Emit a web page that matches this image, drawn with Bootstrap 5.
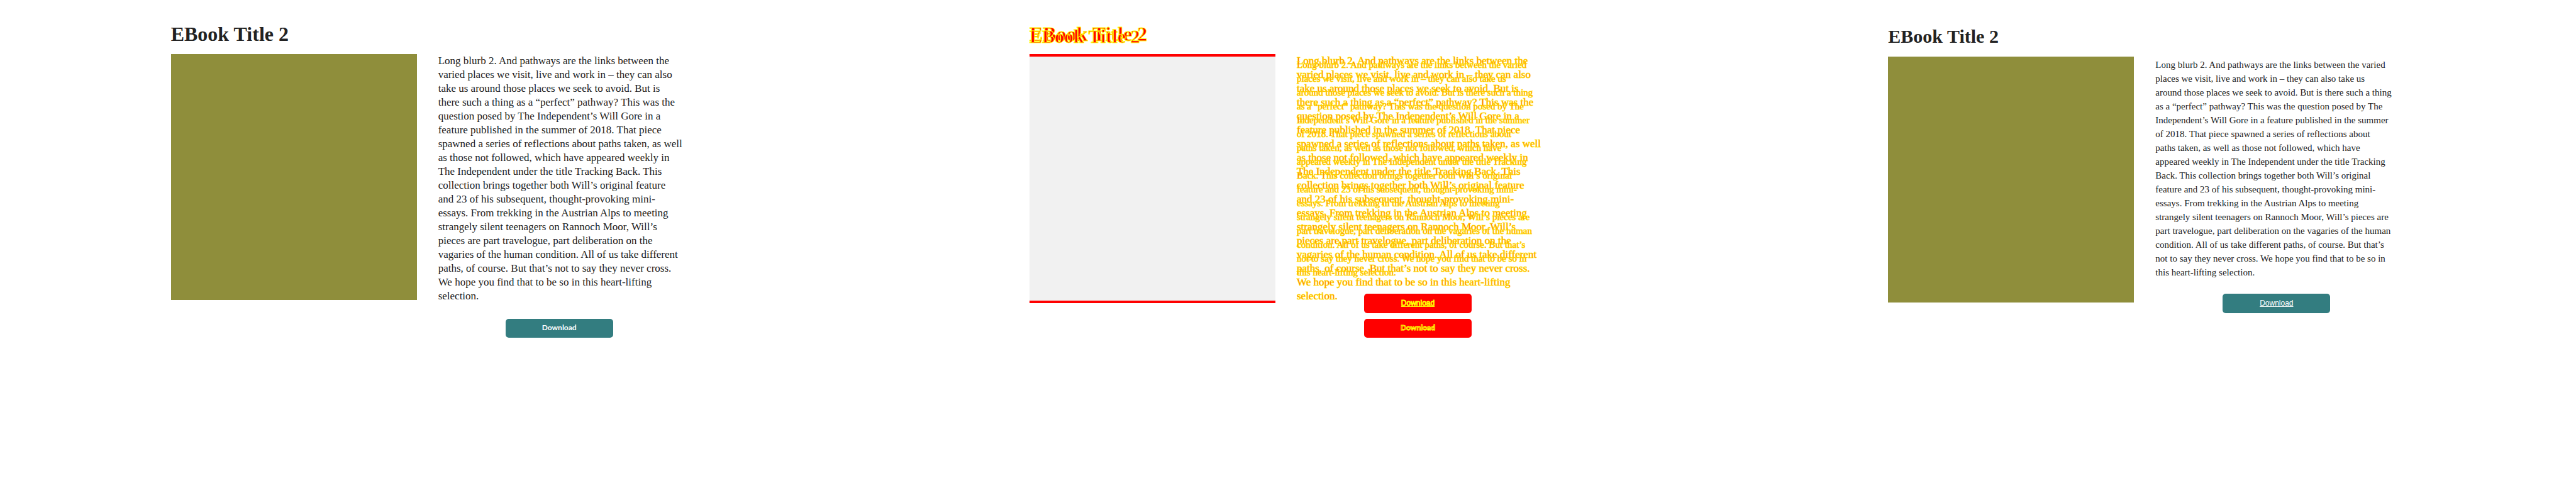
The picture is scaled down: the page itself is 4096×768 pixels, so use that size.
<!DOCTYPE html>
<html lang="en">
<head>
<meta charset="utf-8">
<meta name="viewport" content="width=device-width, initial-scale=1">
<title>EBook Title 2</title>
<link href="https://cdn.jsdelivr.net/npm/bootstrap@5.3.0/dist/css/bootstrap.min.css" rel="stylesheet">
<style>
  body { background: #fff; color: #222; font-family: "Liberation Serif", serif; }
  .ebook { max-width: 822px; padding-top: 34px; }
  .ebook-fallback { padding-top: 38px; }
  .ebook-title { font-size: 32px; line-height: 40px; font-weight: 700; margin-bottom: 12px; white-space: nowrap; }
  .ebook-fallback .ebook-title { font-size: 30px; }
  .ebook-body { gap: 34px; }
  .cover { flex: 0 0 391px; height: 391px; background: #8f8e3b; }
  .copy { flex: 0 1 385px; min-width: 0; }
  .blurb { font-size: 17px; line-height: 22px; margin-bottom: 25px; white-space: nowrap; }
  .ebook-fallback .blurb { font-size: 15px; padding-top: 2px; margin-bottom: 23px; }
  .download { width: 171px; height: 30px; border-radius: 5px; background: #337d80; color: #fff;
    font: 700 12px/28px Lato, sans-serif; text-align: center; text-decoration: none; }
  .ebook-fallback .download { height: 31px; font: 400 12px/31px "Liberation Sans", sans-serif; text-decoration: underline; }
  /* both versions share one grid cell in the comparison column */
  .layers { display: grid; }
  .layers > * { grid-area: 1 / 1; width: 100%; }
  .layers .ebook-title { color: #f00; -webkit-text-stroke: 1px #ff0; }
  .layers .blurb { color: #f00; -webkit-text-stroke: 1px rgba(255, 240, 0, .8); }
  .layers .cover { background: #f1f1f1; height: 396px; border: solid #f00; border-width: 4px 0; }
  .layers .ebook-fallback .cover { visibility: hidden; }
  .layers .download { background: #f00; color: #f00; -webkit-text-stroke: 1px #ff0; }
</style>
</head>
<body>
<main class="container-fluid p-0">
  <div class="row g-0">
    <section class="col-4">
      <article class="ebook mx-auto">
        <h2 class="ebook-title">EBook Title 2</h2>
        <div class="ebook-body d-flex align-items-start">
          <div class="cover"></div>
          <div class="copy">
            <p class="blurb">Long blurb 2. And pathways are the links between the<br>varied places we visit, live and work in – they can also<br>take us around those places we seek to avoid. But is<br>there such a thing as a “perfect” pathway? This was the<br>question posed by The Independent’s Will Gore in a<br>feature published in the summer of 2018. That piece<br>spawned a series of reflections about paths taken, as well<br>as those not followed, which have appeared weekly in<br>The Independent under the title Tracking Back. This<br>collection brings together both Will’s original feature<br>and 23 of his subsequent, thought-provoking mini-<br>essays. From trekking in the Austrian Alps to meeting<br>strangely silent teenagers on Rannoch Moor, Will’s<br>pieces are part travelogue, part deliberation on the<br>vagaries of the human condition. All of us take different<br>paths, of course. But that’s not to say they never cross.<br>We hope you find that to be so in this heart-lifting<br>selection.</p>
            <a class="download d-block mx-auto" href="#">Download</a>
          </div>
        </div>
      </article>
    </section>
    <section class="col-4 layers">
      <article class="ebook mx-auto">
        <h2 class="ebook-title">EBook Title 2</h2>
        <div class="ebook-body d-flex align-items-start">
          <div class="cover"></div>
          <div class="copy">
            <p class="blurb">Long blurb 2. And pathways are the links between the<br>varied places we visit, live and work in – they can also<br>take us around those places we seek to avoid. But is<br>there such a thing as a “perfect” pathway? This was the<br>question posed by The Independent’s Will Gore in a<br>feature published in the summer of 2018. That piece<br>spawned a series of reflections about paths taken, as well<br>as those not followed, which have appeared weekly in<br>The Independent under the title Tracking Back. This<br>collection brings together both Will’s original feature<br>and 23 of his subsequent, thought-provoking mini-<br>essays. From trekking in the Austrian Alps to meeting<br>strangely silent teenagers on Rannoch Moor, Will’s<br>pieces are part travelogue, part deliberation on the<br>vagaries of the human condition. All of us take different<br>paths, of course. But that’s not to say they never cross.<br>We hope you find that to be so in this heart-lifting<br>selection.</p>
            <a class="download d-block mx-auto" href="#">Download</a>
          </div>
        </div>
      </article>
      <article class="ebook ebook-fallback mx-auto">
        <h2 class="ebook-title">EBook Title 2</h2>
        <div class="ebook-body d-flex align-items-start">
          <div class="cover"></div>
          <div class="copy">
            <p class="blurb">Long blurb 2. And pathways are the links between the varied<br>places we visit, live and work in – they can also take us<br>around those places we seek to avoid. But is there such a thing<br>as a “perfect” pathway? This was the question posed by The<br>Independent’s Will Gore in a feature published in the summer<br>of 2018. That piece spawned a series of reflections about<br>paths taken, as well as those not followed, which have<br>appeared weekly in The Independent under the title Tracking<br>Back. This collection brings together both Will’s original<br>feature and 23 of his subsequent, thought-provoking mini-<br>essays. From trekking in the Austrian Alps to meeting<br>strangely silent teenagers on Rannoch Moor, Will’s pieces are<br>part travelogue, part deliberation on the vagaries of the human<br>condition. All of us take different paths, of course. But that’s<br>not to say they never cross. We hope you find that to be so in<br>this heart-lifting selection.</p>
            <a class="download d-block mx-auto" href="#">Download</a>
          </div>
        </div>
      </article>
    </section>
    <section class="col-4">
      <article class="ebook ebook-fallback mx-auto">
        <h2 class="ebook-title">EBook Title 2</h2>
        <div class="ebook-body d-flex align-items-start">
          <div class="cover"></div>
          <div class="copy">
            <p class="blurb">Long blurb 2. And pathways are the links between the varied<br>places we visit, live and work in – they can also take us<br>around those places we seek to avoid. But is there such a thing<br>as a “perfect” pathway? This was the question posed by The<br>Independent’s Will Gore in a feature published in the summer<br>of 2018. That piece spawned a series of reflections about<br>paths taken, as well as those not followed, which have<br>appeared weekly in The Independent under the title Tracking<br>Back. This collection brings together both Will’s original<br>feature and 23 of his subsequent, thought-provoking mini-<br>essays. From trekking in the Austrian Alps to meeting<br>strangely silent teenagers on Rannoch Moor, Will’s pieces are<br>part travelogue, part deliberation on the vagaries of the human<br>condition. All of us take different paths, of course. But that’s<br>not to say they never cross. We hope you find that to be so in<br>this heart-lifting selection.</p>
            <a class="download d-block mx-auto" href="#">Download</a>
          </div>
        </div>
      </article>
    </section>
  </div>
</main>
<script src="https://cdn.jsdelivr.net/npm/bootstrap@5.3.0/dist/js/bootstrap.bundle.min.js"></script>
</body>
</html>
